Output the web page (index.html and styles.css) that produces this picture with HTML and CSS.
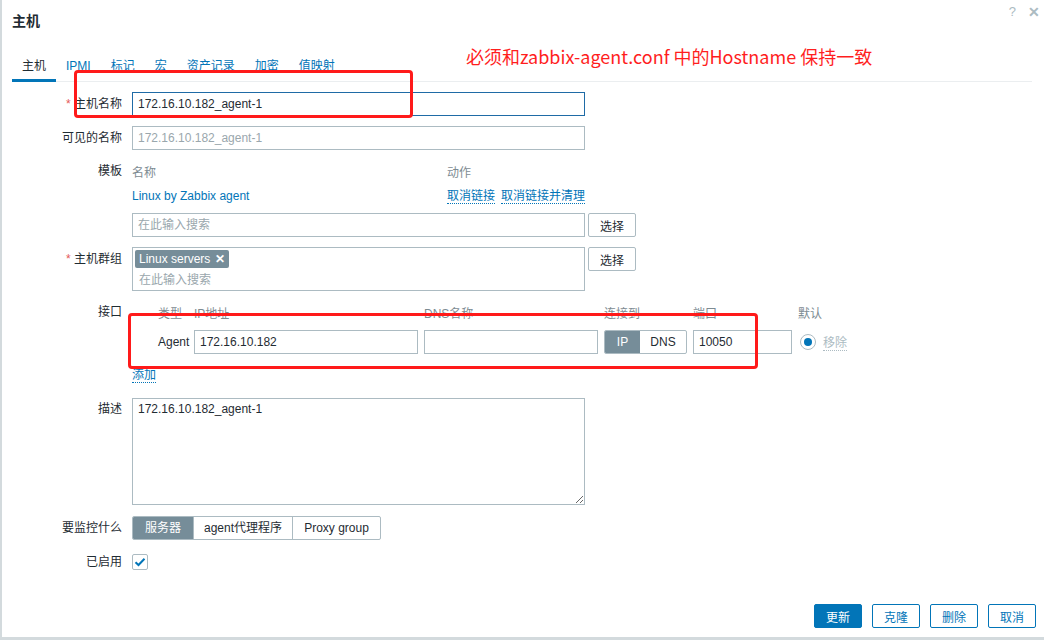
FILE: index.html
```html
<!DOCTYPE html>
<html lang="zh-CN">
<head>
<meta charset="utf-8">
<title>主机</title>
<link rel="stylesheet" href="styles.css">
</head>
<body>
<div class="dialog">
  <div class="header">
    <h1 class="title">主机</h1>
    <div class="header-icons"><span class="hicon">?</span><span class="hicon close">✕</span></div>
  </div>
  <ul class="tabs">
    <li class="tab active">主机</li>
    <li class="tab">IPMI</li>
    <li class="tab">标记</li>
    <li class="tab">宏</li>
    <li class="tab">资产记录</li>
    <li class="tab">加密</li>
    <li class="tab">值映射</li>
  </ul>

  <div class="form">
    <label class="lbl"><span class="req">*</span> 主机名称</label>
    <div class="field"><input class="inp focus" type="text" value="172.16.10.182_agent-1"></div>

    <label class="lbl">可见的名称</label>
    <div class="field"><input class="inp" type="text" placeholder="172.16.10.182_agent-1"></div>

    <label class="lbl lbl-22">模板</label>
    <div class="field">
      <div class="tpl-row tpl-head"><span class="tpl-name muted">名称</span><span class="muted">动作</span></div>
      <div class="tpl-row tpl-data"><span class="tpl-name link">Linux by Zabbix agent</span><span class="link dotted">取消链接</span><span class="link dotted">取消链接并清理</span></div>
      <div class="with-btn search-row"><input class="inp" type="text" placeholder="在此输入搜索"><button class="btn">选择</button></div>
    </div>

    <label class="lbl"><span class="req">*</span> 主机群组</label>
    <div class="field with-btn">
      <div class="multi">
        <span class="tag">Linux servers <span class="tag-x">✕</span></span>
        <span class="ph">在此输入搜索</span>
      </div>
      <button class="btn">选择</button>
    </div>

    <label class="lbl lbl-22">接口</label>
    <div class="field">
      <div class="ifc ifc-head muted">
        <span>类型</span><span>IP地址</span><span>DNS名称</span><span>连接到</span><span>端口</span><span>默认</span>
      </div>
      <div class="ifc ifc-row">
        <span class="ifc-type">Agent</span>
        <input class="inp" type="text" value="172.16.10.182">
        <input class="inp" type="text" value="">
        <div class="toggle"><span class="seg on">IP</span><span class="seg">DNS</span></div>
        <input class="inp" type="text" value="10050">
        <div class="ifc-def"><span class="radio"><span class="dot"></span></span><span class="remove dotted">移除</span></div>
      </div>
      <div class="add-row"><span class="link dotted">添加</span></div>
    </div>

    <label class="lbl desc-lbl">描述</label>
    <div class="field desc-field"><textarea class="ta">172.16.10.182_agent-1</textarea></div>

    <label class="lbl monitor-lbl">要监控什么</label>
    <div class="field monitor-field">
      <div class="segs"><span class="seg2 on">服务器</span><span class="seg2">agent代理程序</span><span class="seg2">Proxy group</span></div>
    </div>

    <label class="lbl">已启用</label>
    <div class="field check-field">
      <span class="check"><svg width="12" height="10" viewBox="0 0 12 10"><path d="M1.5 5.2 L4.5 8 L10.5 1.8" fill="none" stroke="#0275b8" stroke-width="2"/></svg></span>
    </div>
  </div>

  <div class="footer">
    <button class="fbtn primary">更新</button>
    <button class="fbtn">克隆</button>
    <button class="fbtn">删除</button>
    <button class="fbtn">取消</button>
  </div>

  <div class="note">必须和zabbix-agent.conf 中的Hostname 保持一致</div>
  <div class="mark mark1"></div>
  <div class="mark mark2"></div>
</div>
</body>
</html>
```
FILE: styles.css
```css
* { box-sizing: border-box; }
html, body { margin: 0; padding: 0; background: #fff; }
body {
  font-family: "Liberation Sans", Arial, "Noto Sans CJK SC", sans-serif;
  font-size: 12px;
  color: #1f2c33;
}
.dialog {
  position: relative;
  width: 1044px;
  height: 640px;
  border-left: 2px solid #d3dadd;
  border-bottom: 3px solid #d3dadd;
  display: flex;
  flex-direction: column;
  background: #fff;
}
.header {
  height: 40px;
  padding: 0 4px 0 10px;
  display: flex;
  justify-content: space-between;
  align-items: center;
}
.title {
  margin: 0;
  font-size: 14px;
  font-weight: bold;
  color: #1f2c33;
}
.header-icons {
  align-self: flex-start;
  margin-top: 4px;
  display: flex;
  gap: 12px;
  color: #acbbc2;
  font-size: 13px;
}
.hicon.close { font-size: 14px; font-weight: bold; }

.tabs {
  list-style: none;
  margin: 8px 12px 0 10px;
  padding: 0;
  display: flex;
  border-bottom: 1px solid #ebeef0;
}
.tab {
  padding: 9px 10px 4px;
  line-height: 18px;
  border-bottom: 3px solid transparent;
  margin-bottom: -1px;
  color: #0275b8;
}
.tab.active {
  color: #1f2c33;
  border-bottom-color: #0275b8;
}

.form {
  margin-top: 10px;
  padding-left: 10px;
  display: grid;
  grid-template-columns: 110px 1fr;
  column-gap: 10px;
  row-gap: 10px;
  align-items: start;
}
.lbl {
  text-align: right;
  line-height: 24px;
  white-space: nowrap;
}
.lbl-22 { line-height: 22px; }
.req { color: #e45959; }
.field { min-width: 0; }

.inp {
  display: block;
  width: 453px;
  height: 24px;
  border: 1px solid #acbbc2;
  border-radius: 0;
  padding: 0 5px;
  font: inherit;
  color: #1f2c33;
  background: #fff;
  outline: none;
}
.inp.focus { border-color: #1f6ba6; }
.inp::placeholder { color: #9aa7ad; opacity: 1; }

.muted { color: #7d8b92; }
.link { color: #0275b8; }
.dotted { border-bottom: 1px dotted currentColor; }

.tpl-row { display: flex; align-items: center; }
.tpl-head { height: 22px; }
.tpl-data { height: 26px; gap: 6px; padding-top: 2px; }
.tpl-data .tpl-name { margin-right: -6px; }
.tpl-name { width: 315px; }
.tpl-data .dotted { line-height: 14px; }
.search-row { margin-top: 5px; }

.with-btn { display: flex; align-items: flex-start; gap: 3px; }
.btn {
  width: 48px;
  height: 24px;
  border: 1px solid #acbbc2;
  border-radius: 2px;
  background: #fff;
  font: inherit;
  color: #1f2c33;
  padding: 0;
}

.multi {
  width: 453px;
  height: 44px;
  border: 1px solid #acbbc2;
  padding: 2px 5px 0 2px;
  display: flex;
  flex-direction: column;
  align-items: flex-start;
}
.tag {
  background: #768d99;
  color: #fff;
  border-radius: 2px;
  height: 18px;
  line-height: 18px;
  padding: 0 4px;
  white-space: nowrap;
}
.tag-x { font-weight: bold; margin-left: 1px; }
.ph { color: #9aa7ad; margin-top: 5px; padding-left: 4px; line-height: 14px; }

.ifc {
  display: grid;
  grid-template-columns: 30px 224px 174px 83px 99px auto;
  column-gap: 6px;
  margin-left: 26px;
  align-items: center;
}
.ifc-head { height: 22px; }
.ifc-row { margin-top: 7px; }
.ifc-row .inp { width: 100%; }
.ifc-type { white-space: nowrap; }
.toggle {
  display: flex;
  height: 24px;
  border: 1px solid #acbbc2;
  border-radius: 2px;
  overflow: hidden;
}
.seg {
  display: flex;
  align-items: center;
  justify-content: center;
  line-height: 22px;
}
.toggle .seg:first-child { width: 35px; }
.toggle .seg:last-child { flex: 1; }
.seg.on { background: #768d99; color: #fff; }
.ifc-def { display: flex; align-items: center; gap: 7px; padding-left: 2px; }
.radio {
  width: 16px;
  height: 16px;
  border: 1px solid #acbbc2;
  border-radius: 50%;
  display: flex;
  align-items: center;
  justify-content: center;
}
.dot { width: 8px; height: 8px; border-radius: 50%; background: #0275b8; }
.remove { color: #acbbc2; }
.add-row { margin-top: 14px; line-height: 15px; }

.desc-lbl, .desc-field { margin-top: 5px; }
.desc-lbl { line-height: 22px; }
.ta {
  display: block;
  width: 453px;
  height: 107px;
  border: 1px solid #acbbc2;
  padding: 3px 5px;
  font: inherit;
  color: #1f2c33;
  resize: vertical;
  outline: none;
}
.monitor-lbl, .monitor-field { margin-top: 1px; }
.segs {
  display: inline-flex;
  border: 1px solid #acbbc2;
  border-radius: 2px;
  height: 24px;
  overflow: hidden;
}
.seg2 {
  line-height: 22px;
  border-left: 1px solid #acbbc2;
  white-space: nowrap;
  text-align: center;
  padding: 0;
}
.seg2:first-child { border-left: none; width: 60px; }
.seg2.on { background: #768d99; color: #fff; }
.segs .seg2:nth-child(2) { width: 99px; }
.segs .seg2:nth-child(3) { width: 88px; }

.check-field { height: 24px; display: flex; align-items: center; }
.check {
  width: 16px;
  height: 16px;
  border: 1px solid #acbbc2;
  border-radius: 2px;
  display: flex;
  align-items: center;
  justify-content: center;
}

.footer {
  margin-top: auto;
  padding: 0 8px 9px 0;
  display: flex;
  justify-content: flex-end;
  gap: 10px;
}
.fbtn {
  width: 48px;
  height: 24px;
  border: 1px solid #0275b8;
  border-radius: 2px;
  background: #fff;
  color: #0275b8;
  font: inherit;
  padding: 0;
}
.fbtn.primary { background: #0275b8; color: #fff; }

.note {
  position: absolute;
  left: 464px;
  top: 42px;
  color: #ff1e1e;
  font-family: "Noto Sans CJK SC", sans-serif;
  font-size: 18px;
  line-height: 28px;
  white-space: nowrap;
}
.mark {
  position: absolute;
  border: 3px solid #ff1a1a;
  border-radius: 4px;
}
.mark1 { left: 72px; top: 70px; width: 339px; height: 48px; }
.mark2 { left: 126px; top: 313px; width: 630px; height: 56px; }
```
